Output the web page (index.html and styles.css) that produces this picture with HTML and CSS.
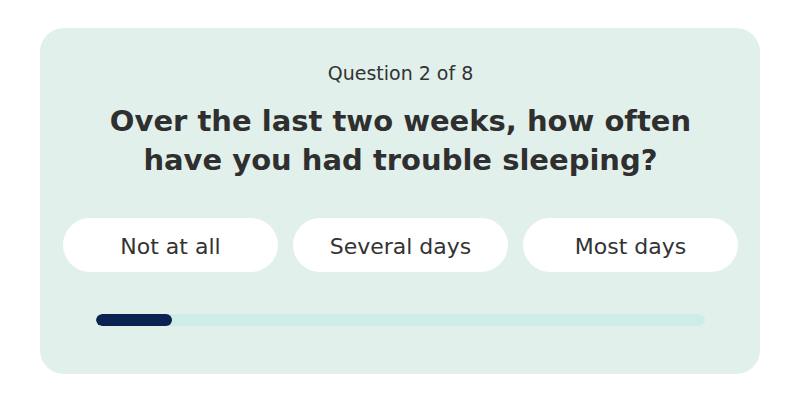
FILE: index.html
```html
<!DOCTYPE html>
<html>
<head>
<meta charset="utf-8">
<link rel="stylesheet" href="styles.css">
</head>
<body>
<div class="card">
  <div class="counter">Question 2 of 8</div>
  <h1 class="title">Over the last two weeks, how often<br>have you had trouble sleeping?</h1>
  <div class="options">
    <button class="option">Not at all</button>
    <button class="option">Several days</button>
    <button class="option">Most days</button>
  </div>
  <div class="progress"><div class="fill" style="width:12.5%"></div></div>
</div>
</body>
</html>
```
FILE: styles.css
```css
html, body {
  margin: 0;
  padding: 0;
  background: #ffffff;
}
body {
  font-family: "DejaVu Sans", Verdana, sans-serif;
  color: #333333;
}
.card {
  box-sizing: border-box;
  margin: 28px 40px 0 40px;
  width: 720px;
  height: 346px;
  background: #e1f0ea;
  border-radius: 24px;
  padding: 34px 22px 0 23px;
  display: flex;
  flex-direction: column;
  align-items: stretch;
}
.counter {
  text-align: center;
  font-size: 19px;
  line-height: 22px;
  color: #333;
}
.title {
  margin: 18px 0 0 0;
  text-align: center;
  font-size: 29px;
  line-height: 39px;
  font-weight: bold;
  color: #2f2f2f;
}
.options {
  margin-top: 38px;
  display: grid;
  grid-template-columns: repeat(3, 1fr);
  gap: 15px;
}
.option {
  height: 54px;
  border: none;
  border-radius: 27px;
  background: #ffffff;
  font-family: "DejaVu Sans", Verdana, sans-serif;
  font-size: 22px;
  color: #333;
  padding: 2px 0 0 0;
}
.progress {
  margin: 42px 33px 0 33px;
  height: 12px;
  border-radius: 6px;
  background: #cdecea;
  overflow: hidden;
}
.fill {
  height: 100%;
  background: #0a2452;
  border-radius: 6px;
}
```
